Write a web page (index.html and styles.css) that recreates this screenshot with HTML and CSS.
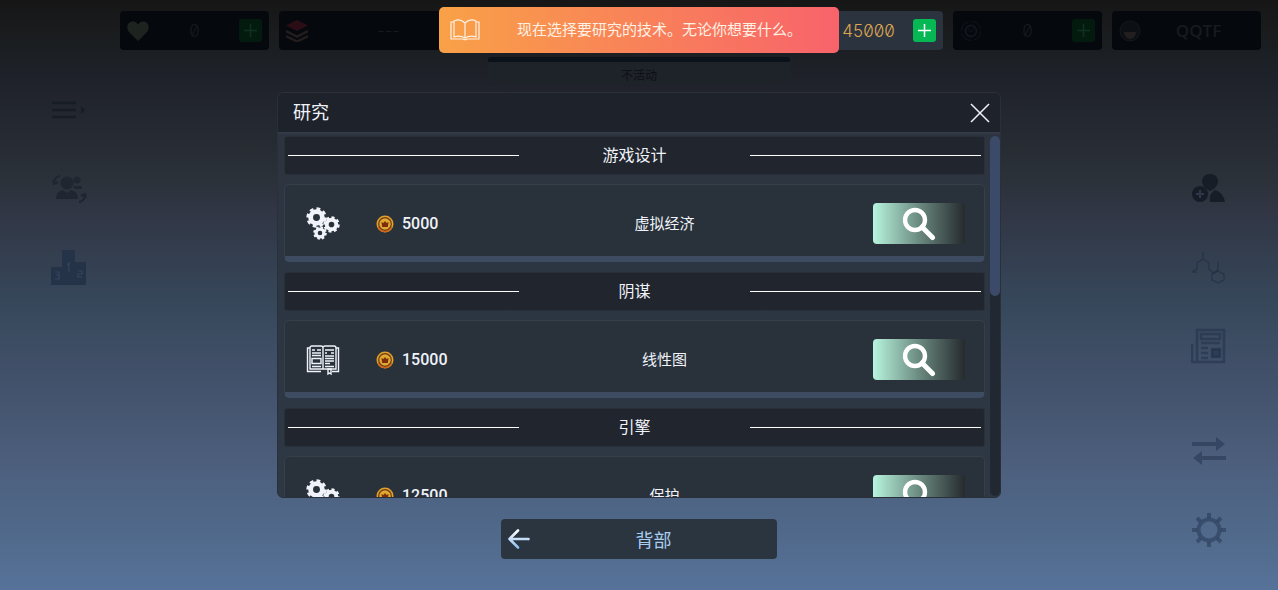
FILE: index.html
```html
<!DOCTYPE html>
<html lang="zh-CN">
<head>
    <meta charset="UTF-8">
    <meta name="viewport" content="width=device-width, initial-scale=1.0">
    <title>研究</title>
    <link rel="stylesheet" href="styles.css">
</head>
<body>
    <!-- shared icons -->
    <svg class="sprite" aria-hidden="true">
        <symbol id="plus" viewBox="0 0 23 23">
            <path d="M11.5 5v13M5 11.5h13" fill="none" stroke="currentColor" stroke-width="1.5"/>
        </symbol>
        <symbol id="gear" viewBox="0 0 20 20">
            <circle cx="10" cy="10" r="5.6" fill="none" stroke="currentColor" stroke-width="4.6"/>
            <circle cx="10" cy="10" r="8.2" fill="none" stroke="currentColor" stroke-width="3" pathLength="16" stroke-dasharray="1.1 0.9"/>
        </symbol>
        <symbol id="gears" viewBox="0 0 34 34">
            <use href="#gear" x="0" y="0" width="21" height="21"/>
            <use href="#gear" x="17" y="9" width="17" height="17"/>
            <use href="#gear" x="7" y="19" width="14" height="14"/>
        </symbol>
        <symbol id="book" viewBox="0 0 34 30">
            <g fill="none" stroke="currentColor" stroke-width="1.4">
                <path d="M4 3H1.500v23.500H15M30 3h2.500v23.500H26M4 24V3q0-2 2-2h9q2 0 2 2 0-2 2-2h9q2 0 2 2v21H4zM17 3v21"/>
                <path d="M6 5h3M11 5h4M6 8h9M6 10.500h9M6 21.500h9M19 5h9M19 8h2M25 8h3M19 11h9M19 13.500h9M19 16h9M19 18.500h5M19 21.500h9"/>
                <path d="M6 13.500h9v5H6zM22 24h3v5l-1.500-1-1.500 1z"/>
            </g>
        </symbol>
        <symbol id="coin" viewBox="0 0 18 18">
            <circle cx="9" cy="9" r="8.500" fill="#e3a02a"/>
            <circle cx="9" cy="9" r="6.300" fill="#dfa832" stroke="#6b3a10" stroke-width="1.200"/>
            <path d="M5.500 7l2 1L9 6l1.500 2 2-1-.7 5H6.200z" fill="#7d2c0c"/>
            <path d="M2 12a7.600 7.600 0 0 0 14 0" fill="none" stroke="#d8651c" stroke-width="1.300"/>
        </symbol>
        <symbol id="search" viewBox="0 0 34 34">
            <circle cx="13" cy="13" r="10" fill="none" stroke="currentColor" stroke-width="4.400"/>
            <path d="M20 20l10.500 10.500" stroke="currentColor" stroke-width="5" stroke-linecap="round"/>
        </symbol>
    </svg>

    <header class="top-bar">
        <div class="stat dim">
            <svg class="stat-icon heart" viewBox="0 0 22 22"><path d="M11 21L2 12C-1 8 0 2 5.500 1.500 8.500 1.300 10 3 11 4.500 12 3 13.500 1.300 16.500 1.500 22 2 23 8 20 12z" fill="currentColor"/></svg>
            <span class="stat-value">0</span>
            <button class="plus-btn" aria-label="增加生命"><svg><use href="#plus"/></svg></button>
        </div>
        <div class="stat dim">
            <svg class="stat-icon layers" viewBox="0 0 22 22"><path d="M0 5.500L11 0l11 5.500L11 11z" fill="#2b0e15"/><path d="M0 11l11 5.500L22 11M0 16l11 5.500L22 16" fill="none" stroke="#231d1d" stroke-width="2.500"/></svg>
            <span class="stat-value">---</span>
        </div>
        <div class="stat gold">
            <svg class="stat-icon"><use href="#coin"/></svg>
            <span class="stat-value">45000</span>
            <button class="plus-btn" aria-label="增加金币"><svg><use href="#plus"/></svg></button>
        </div>
        <div class="stat dim">
            <svg class="stat-icon ring" viewBox="0 0 22 22"><g fill="none" stroke="currentColor"><circle cx="11" cy="11" r="9.500" stroke-dasharray="12 3"/><circle cx="11" cy="11" r="5.500" stroke-width="2"/><path d="M8 8l3 4 3-4"/></g></svg>
            <span class="stat-value">0</span>
            <button class="plus-btn" aria-label="增加代币"><svg><use href="#plus"/></svg></button>
        </div>
        <div class="stat dim">
            <svg class="stat-icon avatar" viewBox="0 0 22 22"><circle cx="11" cy="11" r="10" fill="#0c1014" stroke="#14191e"/><path d="M5 12h12q-1 7-6 7t-6-7z" fill="#231f1e"/></svg>
            <span class="stat-value name">QQTF</span>
        </div>
    </header>

    <div class="toast" role="status">
        <svg viewBox="0 0 30 22"><g fill="none" stroke="currentColor" stroke-width="1.200"><path d="M15 4Q10-1 4 2v16q6-2 11 1 5-3 11-1V2q-6-3-11 2v15"/><path d="M4 3H1v17h12q2 1.500 4 0h12V3h-3"/></g></svg>
        <span>现在选择要研究的技术。无论你想要什么。</span>
    </div>

    <main class="screen">
        <nav class="rail left">
            <button aria-label="菜单"><svg viewBox="0 0 36 36"><path d="M1 11h24M1 18h24M1 25h24" stroke="currentColor" stroke-width="2.500"/><path d="M30 14l4 4-4 4z" fill="currentColor"/></svg></button>
            <button aria-label="员工"><svg viewBox="0 0 36 36"><g fill="currentColor"><circle cx="16" cy="12" r="6.500"/><circle cx="26" cy="9" r="3.500"/><path d="M5 28q0-8 7-9l4 3 4-3q7 1 7 9zM22 15h9v3h-7z"/></g><path d="M3 12q0-6 6-7M2 9l1 4 4-2M34 24q0 6-6 7M35 27l-1-4-4 2" fill="none" stroke="currentColor" stroke-width="2"/></svg></button>
            <button aria-label="排行榜"><svg viewBox="0 0 36 36"><path d="M0 17h11V0h13v12h11v23H0z" fill="currentColor"/><path d="M4 22h4v3H5h3v4H4M16 15l2-2v9M27 21h4v3h-4v3h4" fill="none" stroke="#34445a" stroke-width="1.200"/></svg></button>
        </nav>

        <div class="center">
            <div class="status">不活动</div>

            <section class="modal" aria-labelledby="modal-title">
                <div class="modal-head">
                    <h1 id="modal-title">研究</h1>
                    <button class="close-btn" aria-label="关闭"><svg viewBox="0 0 20 20"><path d="M1 1l18 18M19 1L1 19" stroke="currentColor" stroke-width="1.500"/></svg></button>
                </div>
                <div class="modal-body">
                    <div class="list">
                        <h2 class="group">游戏设计</h2>
                        <div class="item">
                            <svg class="item-icon"><use href="#gears"/></svg>
                            <span class="price"><svg><use href="#coin"/></svg>5000</span>
                            <span class="item-name">虚拟经济</span>
                            <button class="search-btn" aria-label="研究虚拟经济"><svg><use href="#search"/></svg></button>
                        </div>
                        <h2 class="group">阴谋</h2>
                        <div class="item">
                            <svg class="item-icon"><use href="#book"/></svg>
                            <span class="price"><svg><use href="#coin"/></svg>15000</span>
                            <span class="item-name">线性图</span>
                            <button class="search-btn" aria-label="研究线性图"><svg><use href="#search"/></svg></button>
                        </div>
                        <h2 class="group">引擎</h2>
                        <div class="item">
                            <svg class="item-icon"><use href="#gears"/></svg>
                            <span class="price"><svg><use href="#coin"/></svg>12500</span>
                            <span class="item-name">保护</span>
                            <button class="search-btn" aria-label="研究保护"><svg><use href="#search"/></svg></button>
                        </div>
                    </div>
                    <div class="scroll-track"><div class="scroll-thumb"></div></div>
                </div>
            </section>

            <button class="back-btn">
                <svg viewBox="0 0 22 20"><defs><linearGradient id="arrow" x1="0" y1="0" x2="0" y2="1"><stop offset="0" stop-color="#fff"/><stop offset="1" stop-color="#8dbdf0"/></linearGradient></defs><path d="M10 1.500L1.500 10l8.500 8.500M1.500 10H20.500v.1" fill="none" stroke="url(#arrow)" stroke-width="2.600" stroke-linecap="round" stroke-linejoin="round"/></svg>
                <span>背部</span>
            </button>
        </div>

        <nav class="rail right">
            <button aria-label="添加好友"><svg viewBox="0 -3 36 36"><g fill="currentColor"><path d="M11 9q0-8 8-8t8 8q-1 6-8 9-7-3-8-9zM19 29q-1-9 5-12 8 2 10 12z"/><circle cx="9" cy="21" r="8"/></g><path d="M9 17v8M5 21h8" stroke="#30374a" stroke-width="2"/></svg></button>
            <button class="faint" aria-label="研究"><svg viewBox="0 0 36 36"><g fill="none" stroke="currentColor" stroke-width="1.500"><path d="M12 3v7M1 23l5-3v-6l6-4 6 4v6l4 4 5-3v-8M1 23h5"/><path d="M27 22l6 3v6l-6 3-6-3v-6z"/></g></svg></button>
            <button class="faint" aria-label="新闻"><svg viewBox="0 0 36 36"><g fill="none" stroke="currentColor" stroke-width="2.500"><path d="M6 2h27v32H6zM1 16v18h5"/><path d="M10 6h19v5H10zM10 15h19M10 20h7M10 25h7M10 30h7"/><path d="M21 21h8v8h-8z" fill="currentColor"/></g></svg></button>
            <button class="faint apart" aria-label="交易"><svg viewBox="0 0 36 36"><g fill="currentColor"><path d="M1 9h24V4l9 7-9 7v-5H1zM35 27H11v5l-9-7 9-7v5h24z"/></g></svg></button>
            <button class="faint" aria-label="设置"><svg viewBox="0 0 36 36"><g fill="none" stroke="currentColor"><circle cx="18" cy="18" r="10.500" stroke-width="4"/><path d="M18 1v5M18 30v5M1 18h5M30 18h5M6 6l3.500 3.500M26.500 26.500L30 30M6 30l3.500-3.500M26.500 9.500L30 6" stroke-width="4"/></g></svg></button>
        </nav>
    </main>
</body>
</html>
```

FILE: styles.css
```css
* {
    box-sizing: border-box;
}
body {
    margin: 0;
    height: 100vh;
    display: flex;
    flex-direction: column;
    overflow: hidden;
    font-family: Roboto, "Noto Sans CJK SC", sans-serif;
    color: #f0f3fa;
    background: linear-gradient(#161616 0%, #1b1e21 8%, #1f222b 14%, #2b3138 30%, #313746 37%, #36475a 51%, #42516a 64%, #4c5e7c 78%, #50698a 90%, #577299 100%);
}
button {
    font: inherit;
    color: inherit;
    border: none;
    padding: 0;
    background: none;
    cursor: pointer;
}
svg {
    display: block;
}
.sprite {
    position: absolute;
    width: 0;
    height: 0;
}

/* top bar */
.top-bar {
    display: grid;
    grid-template-columns: 149fr 219fr 276fr 149fr 149fr 149fr;
    gap: 10px;
    padding: 11px 17px 0 120px;
}
.stat {
    display: grid;
    grid-template-columns: 24px 1fr 24px;
    align-items: center;
    height: 39px;
    padding: 0 6px;
    border-radius: 4px;
    background: #2b333f;
}
.stat.dim {
    background: #05090d;
}
.stat.gold {
    grid-column: 4;
}
.stat-icon {
    width: 22px;
    height: 22px;
    justify-self: center;
}
.heart {
    color: #1d2420;
}
.ring {
    color: #10161f;
}
.stat-value {
    font-family: Inter, sans-serif;
    font-size: 17px;
    font-weight: 300;
    font-variant-numeric: slashed-zero;
    text-align: center;
}
.gold .stat-value {
    color: #dda650;
}
.dim .stat-value {
    color: #171b1f;
}
.dim .name {
    grid-column: 2 / 4;
    font-family: "Open Sans", sans-serif;
    font-weight: 600;
}
.plus-btn {
    width: 23px;
    height: 23px;
    border-radius: 3px;
    background: #05b853;
    color: #fff;
}
.plus-btn svg {
    width: 23px;
    height: 23px;
}
.dim .plus-btn {
    background: #031b0e;
    color: #103020;
}

/* notification over the bar */
.toast {
    position: absolute;
    top: 7px;
    left: 50%;
    transform: translateX(-50%);
    display: flex;
    align-items: center;
    width: 400px;
    height: 46px;
    padding-left: 11px;
    border-radius: 5px;
    background: linear-gradient(to right, #f9a147, #f8636b);
    color: #fff1e4;
    font-size: 15px;
}
.toast svg {
    width: 30px;
    height: 22px;
}
.toast span {
    flex: 1;
    padding-bottom: 3px;
    text-align: center;
}

.screen {
    flex: 1;
    min-height: 0;
    display: flex;
    justify-content: space-between;
}
.center {
    width: 57%;
    max-width: 724px;
    display: flex;
    flex-direction: column;
    align-items: center;
    padding: 7px 0 31px;
}
.status {
    width: 302px;
    height: 28px;
    padding-top: 5px;
    border-top: 5px solid #0b1219;
    border-radius: 3px;
    background: #1e2229;
    color: #0d1116;
    font-size: 12px;
    line-height: 18px;
    text-align: center;
}

/* side icons */
.rail {
    width: 87px;
    display: flex;
    flex-direction: column;
    gap: 43px;
    color: #171d27;
}
.rail svg {
    width: 36px;
    height: 36px;
}
.rail.left {
    padding: 42px 0 0 51px;
}
.rail.right {
    justify-content: flex-end;
    padding: 0 51px 42px 0;
}
.rail.left button:nth-child(2) {
    color: #1f2631;
}
.rail.left button:nth-child(3) {
    color: #243348;
}
.rail.right .faint {
    color: rgba(22, 38, 66, 0.4);
}
.rail .apart {
    margin-top: 26px;
}

/* research window */
.modal {
    flex: 1;
    min-height: 0;
    width: 100%;
    margin: 7px 0 21px;
    display: flex;
    flex-direction: column;
    overflow: hidden;
    border: 1px solid #29303a;
    border-radius: 6px;
    background: linear-gradient(#2e333e, #2c3643 40%, #2d3844);
}
.modal-head {
    display: flex;
    align-items: center;
    justify-content: space-between;
    height: 41px;
    padding: 0 10px 0 15px;
    border-bottom: 2px solid #333945;
    background: #1e222a;
}
.modal-head h1 {
    margin: 0;
    padding-bottom: 3px;
    font-size: 18px;
    font-weight: 400;
}
.close-btn svg {
    width: 20px;
    height: 20px;
}
.modal-body {
    flex: 1;
    min-height: 0;
    display: flex;
    gap: 5px;
    padding-left: 6px;
}
.list {
    flex: 1;
    overflow: hidden;
    padding-top: 2px;
}
.group {
    display: grid;
    grid-template-columns: 1fr 1fr 1fr;
    align-items: center;
    height: 39px;
    margin: 0 0 9px;
    padding: 0 3px;
    border: 1px solid #2a3039;
    border-radius: 3px;
    background: #21252d;
    font-size: 16px;
    font-weight: 400;
    line-height: 20px;
    text-align: center;
}
.group::before,
.group::after {
    content: "";
    height: 1px;
    background: #fff;
}
.item {
    display: grid;
    grid-template-columns: 76px 115px 1fr 131px;
    align-items: center;
    height: 78px;
    margin-bottom: 10px;
    padding-top: 6px;
    border: 1px solid #353e4a;
    border-bottom: 6px solid #3e4c62;
    border-radius: 5px;
    background: #29313b;
}
.item-icon {
    width: 34px;
    height: 34px;
    justify-self: center;
}
.price {
    display: flex;
    align-items: center;
    gap: 8px;
    padding-left: 15px;
    font-size: 16px;
    font-weight: 500;
}
.price svg {
    width: 18px;
    height: 18px;
}
.item-name {
    padding-bottom: 3px;
    font-size: 15px;
    text-align: center;
}
.search-btn {
    display: flex;
    align-items: center;
    justify-content: center;
    justify-self: center;
    width: 92px;
    height: 41px;
    border-radius: 4px;
    background: linear-gradient(to right, #b8f5de, #6b8a80 50%, #262a2e);
    color: #fff;
}
.search-btn svg {
    width: 34px;
    height: 34px;
}
.scroll-track {
    width: 10px;
    margin: 2px 0 1px;
    border-radius: 5px;
    background: #222831;
}
.scroll-thumb {
    height: 160px;
    border-radius: 5px;
    background: #3b4a68;
}

.back-btn {
    display: flex;
    align-items: center;
    width: 276px;
    height: 40px;
    padding-left: 7px;
    border-radius: 4px;
    background: #2b3540;
    color: #a9cdf0;
    font-size: 18px;
}
.back-btn svg {
    width: 22px;
    height: 20px;
}
.back-btn span {
    flex: 1;
}
```
